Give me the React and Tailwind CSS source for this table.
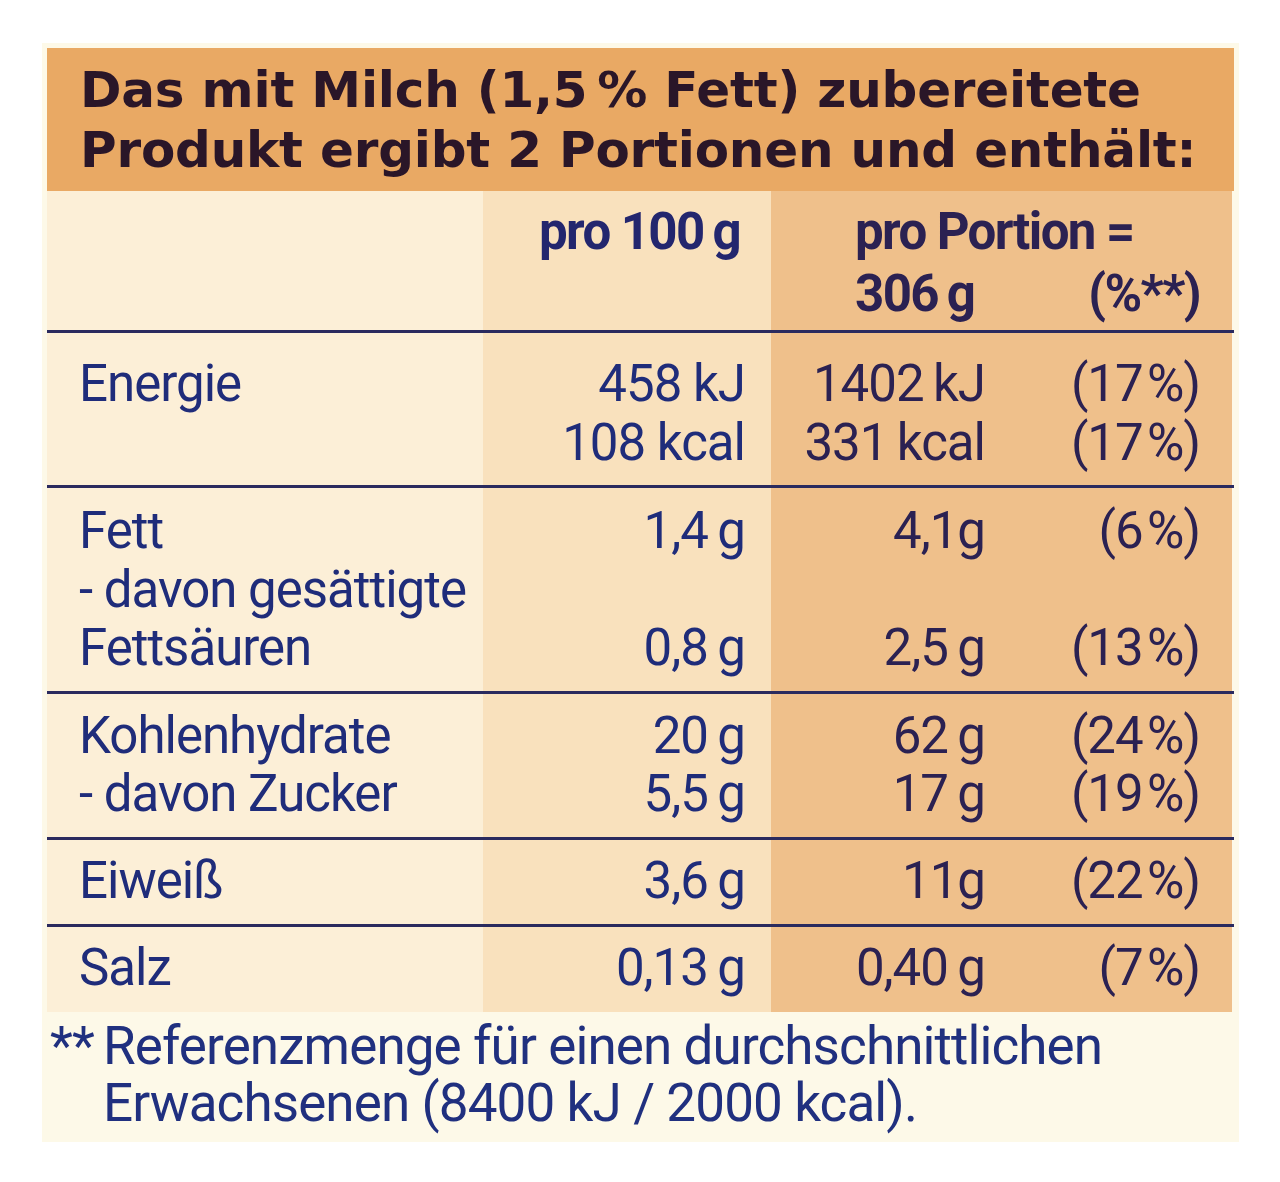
const rows = [
  {
    label: ['Energie', ''],
    per100: ['458 kJ', '108 kcal'],
    portion: ['1402\u2009kJ', '331\u2009kcal'],
    pct: ['(17\u200a%)', '(17\u200a%)'],
    pad: 'pt-[22px] pb-[13px]',
  },
  {
    label: ['Fett', '- davon gesättigte', 'Fettsäuren'],
    per100: ['1,4\u2009g', '', '0,8\u2009g'],
    portion: ['4,1g', '', '2,5\u2009g'],
    pct: ['(6\u200a%)', '', '(13\u200a%)'],
    pad: 'pt-[14px] pb-[13px]',
  },
  {
    label: ['Kohlenhydrate', '- davon Zucker'],
    per100: ['20\u2009g', '5,5\u2009g'],
    portion: ['62\u2009g', '17\u2009g'],
    pct: ['(24\u200a%)', '(19\u200a%)'],
    pad: 'pt-[13px] pb-[13px]',
  },
  {
    label: ['Eiweiß'],
    per100: ['3,6\u2009g'],
    portion: ['11g'],
    pct: ['(22\u200a%)'],
    pad: 'pt-[12px] pb-[14px]',
  },
  {
    label: ['Salz'],
    per100: ['0,13\u2009g'],
    portion: ['0,40\u2009g'],
    pct: ['(7\u200a%)'],
    pad: 'pt-[12px] pb-[14px]',
  },
];

const Lines = ({ items }) =>
  items.map((t, i) => (
    <div key={i} className="h-[58.5px] whitespace-nowrap">
      {t || '\u00a0'}
    </div>
  ));

const App = () => {
  return (
    <div className="w-[1280px] h-[1182px] bg-white pt-[43px] pl-[42px] font-['Roboto',sans-serif]">
      <div className="w-[1197px] h-[1099px] bg-[#fdf9e8] p-[5px]">
        {/* title */}
        <div className="bg-[#e9a964] pl-[33px] pt-[12px] pb-[11px] font-['DejaVu_Sans',sans-serif] text-[50px] leading-[60px] font-bold tracking-[-0.2px] text-[#2a1628] whitespace-nowrap">
          <div>Das mit Milch (1,5&#8201;% Fett) zubereitete</div>
          <div>Produkt ergibt 2 Portionen und enthält:</div>
        </div>

        {/* column head */}
        <div className="grid grid-cols-[436px_288px_461px] text-[51px] leading-[62px] font-bold tracking-[-1.6px] text-[#23266e]">
          <div className="bg-[#fcefd7]" />
          <div className="bg-[#f9e1bd] pt-[10px] pb-[5px] pr-[31px] text-right">pro 100&#8201;g</div>
          <div className="bg-[#efc08b] pt-[10px] pb-[5px] pl-[84px] pr-[32px] text-[#2b2152]">
            <div>pro Portion =</div>
            <div className="flex justify-between">
              <span>306&#8201;g</span>
              <span>(%**)</span>
            </div>
          </div>
        </div>

        {/* nutrient rows */}
        {rows.map((r) => (
          <div
            key={r.label[0]}
            className="grid grid-cols-[436px_288px_461px] border-t-[3px] border-[#2a2a5e] text-[51px] leading-[58.5px] tracking-[-1px]"
          >
            <div className={`bg-[#fcefd7] pl-[32px] text-[#1f2c7a] ${r.pad}`}>
              <Lines items={r.label} />
            </div>
            <div className={`bg-[#f9e1bd] pr-[26px] text-right text-[#1f2c7a] ${r.pad}`}>
              <Lines items={r.per100} />
            </div>
            <div className={`bg-[#efc08b] pr-[32px] grid grid-cols-[214px_1fr] text-right text-[#2b2152] ${r.pad}`}>
              <div>
                <Lines items={r.portion} />
              </div>
              <div>
                <Lines items={r.pct} />
              </div>
            </div>
          </div>
        ))}

        {/* footnote */}
        <div className="flex pt-[6px] text-[53px] leading-[57px] tracking-[-0.9px] text-[#20307f]">
          <div className="w-[56px] pl-[3px] shrink-0">**</div>
          <div>
            <div>Referenzmenge für einen durchschnittlichen</div>
            <div>Erwachsenen (8400 kJ / 2000 kcal).</div>
          </div>
        </div>
      </div>
    </div>
  );
};

export default App;
